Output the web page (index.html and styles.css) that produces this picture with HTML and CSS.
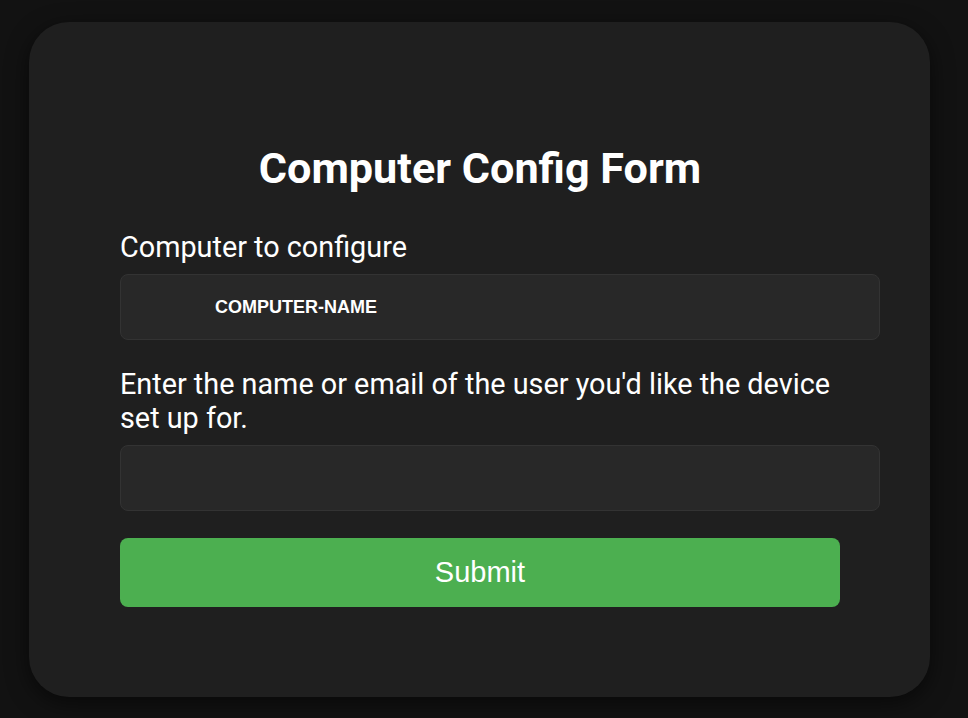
FILE: index.html
```html
<!DOCTYPE html>
<html lang="en">
<head>
<meta charset="utf-8">
<title>Computer Config Form</title>
<link rel="stylesheet" href="styles.css">
</head>
<body>
<div class="page">
  <main class="card">
    <h1 class="title">Computer Config Form</h1>
    <form class="form">
      <label class="label" for="computer">Computer to configure</label>
      <input class="field" id="computer" type="text" value="COMPUTER-NAME" readonly>
      <label class="label" for="user">Enter the name or email of the user you'd like the device set up for.</label>
      <input class="field" id="user" type="text">
      <button class="submit" type="button">Submit</button>
    </form>
  </main>
</div>
</body>
</html>
```
FILE: styles.css
```css
* { box-sizing: border-box; }
html, body { margin: 0; padding: 0; }
body {
  background: #121212;
  color: #ffffff;
  font-family: Roboto, "Liberation Sans", Arial, sans-serif;
  height: 718px;
  overflow: hidden;
}
.page {
  padding: 22px 38px 0 29px;
}
.card {
  width: 901px;
  height: 675px;
  background: #1f1f1f;
  border-radius: 40px;
  box-shadow: 0 6px 22px rgba(0, 0, 0, 0.55);
  padding: 122px 90px 90px 91px;
}
.title {
  margin: 0 0 36px;
  font-size: 43.2px;
  line-height: 50px;
  font-weight: 700;
  text-align: center;
}
.form {
  display: flex;
  flex-direction: column;
  align-items: flex-start;
}
.label {
  font-size: 28.8px;
  line-height: 34px;
  margin-bottom: 10px;
}
.label + .field + .label {
  line-height: 34px;
}
.field {
  width: calc(100% + 40px);
  height: 66px;
  margin: 0 0 27px;
  padding: 0 20px 0 94px;
  background: #282828;
  border: 1px solid #333333;
  border-radius: 8px;
  color: #ffffff;
  font-family: "Liberation Sans", Arial, sans-serif;
  font-size: 18px;
  font-weight: 700;
  outline: none;
}
.field:last-of-type {
  margin-bottom: 27px;
}
.submit {
  width: 100%;
  height: 69px;
  background: #4caf50;
  border: none;
  border-radius: 8px;
  color: #ffffff;
  font-family: "Liberation Sans", Arial, sans-serif;
  font-size: 29px;
}
```
